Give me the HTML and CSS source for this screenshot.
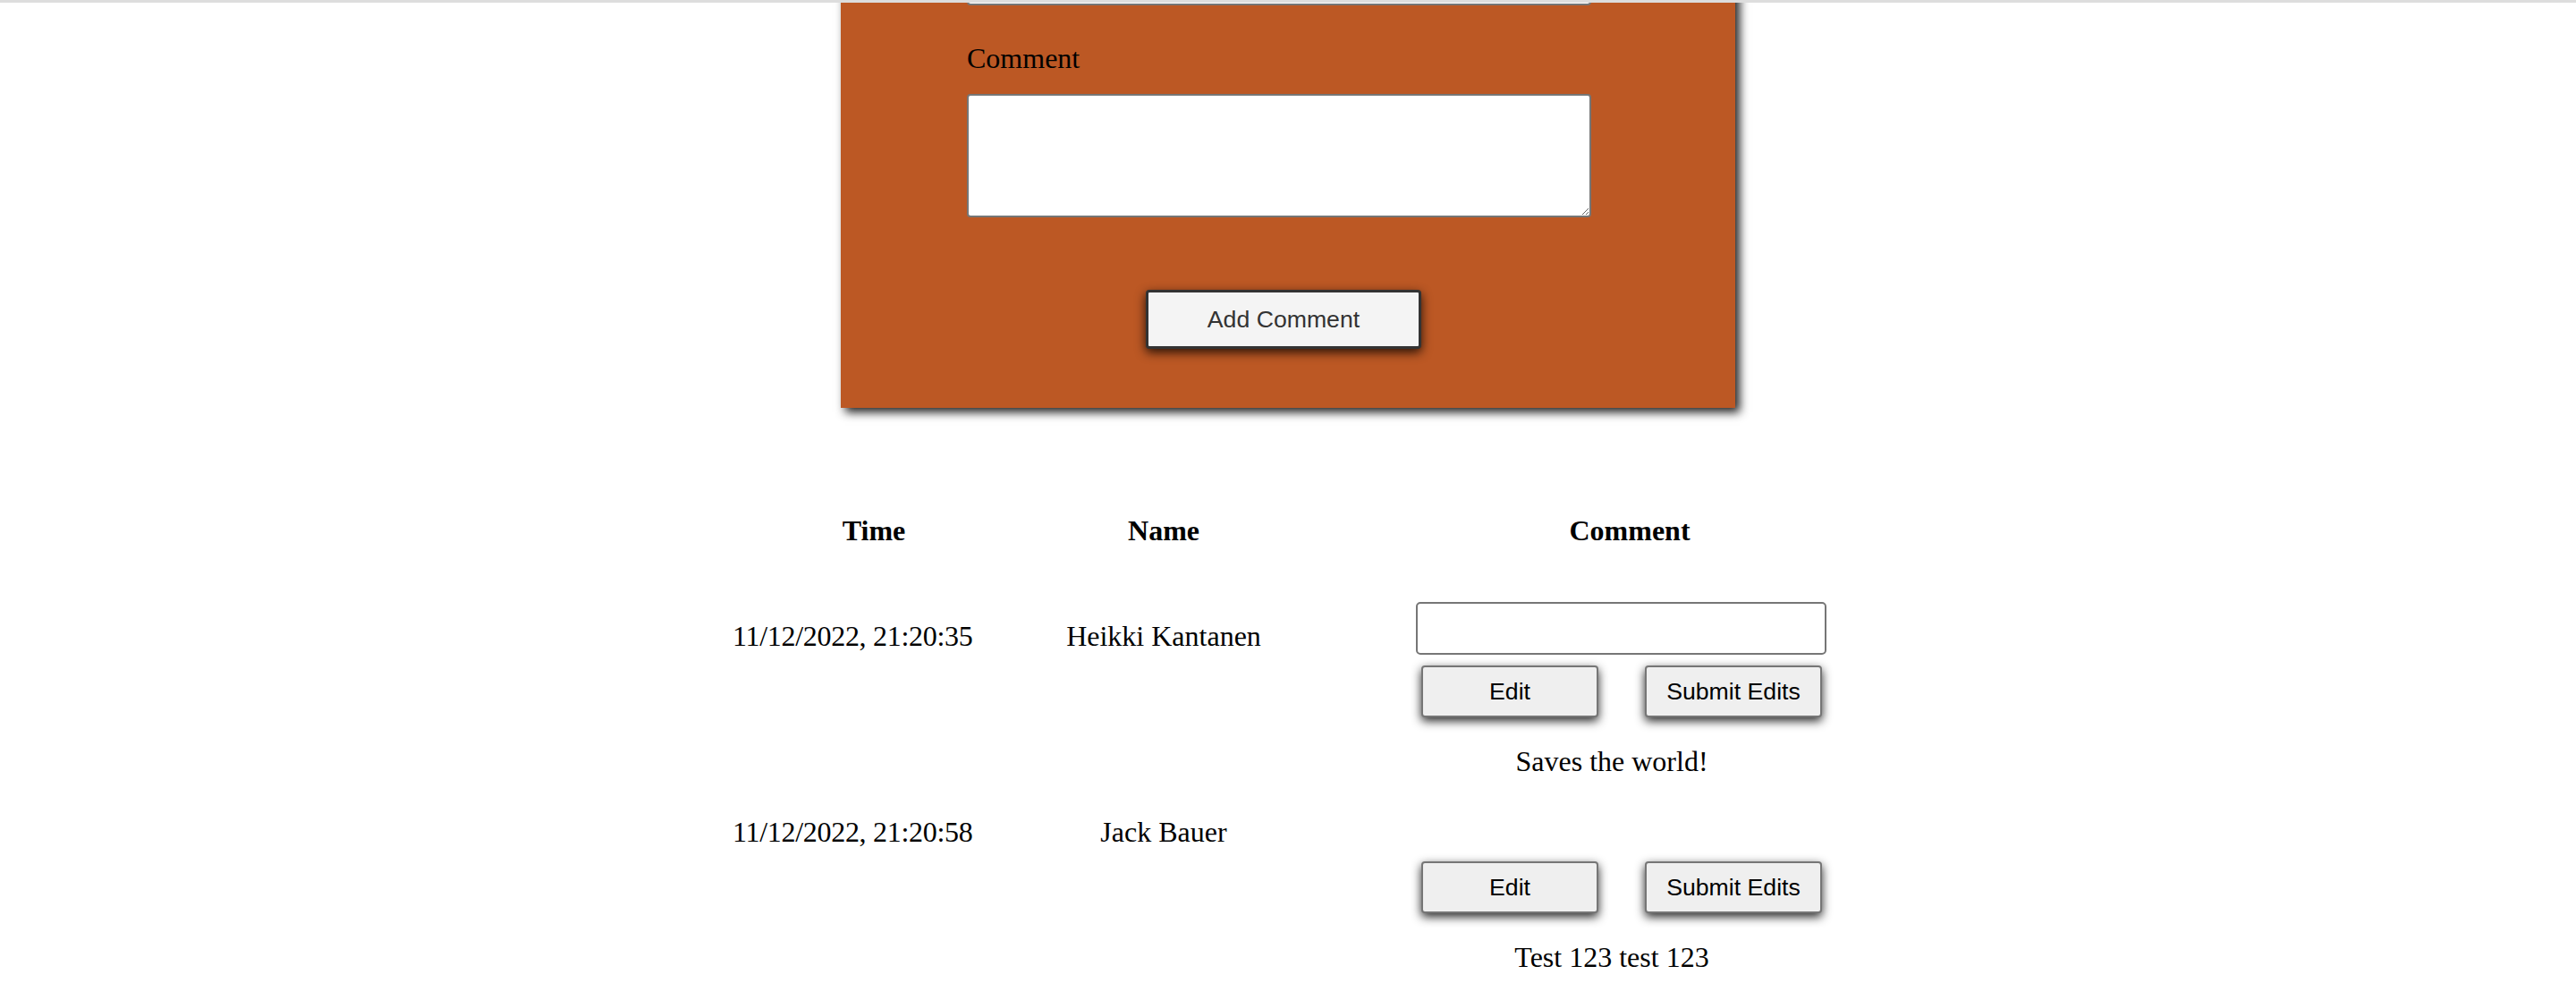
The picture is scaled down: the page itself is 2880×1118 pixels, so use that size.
FILE: index.html
```html
<!DOCTYPE html>
<html lang="en">
<head>
<meta charset="utf-8">
<title>Guestbook</title>
<link rel="stylesheet" href="styles.css">
</head>
<body>
<div class="top-rule"></div>
<main class="page">
  <form class="card">
    <input class="field-input" id="name" type="text" aria-label="Name">
    <label class="field-label" for="comment">Comment</label>
    <textarea class="field-textarea" id="comment"></textarea>
    <button class="add-btn" type="button">Add Comment</button>
  </form>

  <section class="comments">
    <div class="row row-head">
      <div class="cell cell-time">Time</div>
      <div class="cell cell-name">Name</div>
      <div class="cell cell-comment">Comment</div>
    </div>

    <div class="row">
      <div class="cell cell-time">11/12/2022, 21:20:35</div>
      <div class="cell cell-name">Heikki Kantanen</div>
      <div class="cell cell-comment">
        <div class="comment-box">
          <input class="edit-input" type="text" aria-label="Edit comment">
          <div class="edit-actions">
            <button class="edit-btn" type="button">Edit</button>
            <button class="edit-btn" type="button">Submit Edits</button>
          </div>
          <div class="comment-text">Saves the world!</div>
        </div>
      </div>
    </div>

    <div class="row">
      <div class="cell cell-time">11/12/2022, 21:20:58</div>
      <div class="cell cell-name">Jack Bauer</div>
      <div class="cell cell-comment">
        <div class="comment-box">
          <input class="edit-input edit-input-hidden" type="text" aria-label="Edit comment">
          <div class="edit-actions">
            <button class="edit-btn" type="button">Edit</button>
            <button class="edit-btn" type="button">Submit Edits</button>
          </div>
          <div class="comment-text">Test 123 test 123</div>
        </div>
      </div>
    </div>
  </section>
</main>
</body>
</html>
```

FILE: styles.css
```css
html, body {
  margin: 0;
  padding: 0;
  background: #ffffff;
}

body {
  font-family: "Liberation Serif", "Times New Roman", serif;
  font-size: 32px;
  color: #000000;
}

.top-rule {
  position: fixed;
  top: 0;
  left: 0;
  right: 0;
  height: 3px;
  background: #dddddd;
  z-index: 5;
}

/* ---------- form card (page is scrolled: its top is above the viewport) ---------- */
.card {
  width: 1000px;
  box-sizing: border-box;
  margin: -93px auto 0;
  padding: 40px 0 66px 141px;
  background: #bc5824;
  box-shadow: 5px 5px 10px #222222;
}

.field-label {
  display: block;
  line-height: 37px;
  margin: 41px 0 21px;
}

.field-input,
.field-textarea {
  display: block;
  box-sizing: border-box;
  width: 698px;
  margin: 0;
  padding: 0;
  border: 2px solid #767676;
  border-radius: 4px;
  background: #ffffff;
}

.field-input {
  height: 59px;
}

.field-textarea {
  height: 138px;
  resize: both;
}

.add-btn {
  display: block;
  box-sizing: border-box;
  width: 308px;
  height: 66px;
  margin: 81px 0 0 200px;
  padding: 0;
  background: #f4f4f4;
  border: 3px solid #333333;
  border-radius: 4px;
  box-shadow: 0 4px 12px rgba(0, 0, 0, 0.8);
  font-family: "Liberation Sans", Arial, sans-serif;
  font-size: 26.67px;
  color: #333333;
}

/* ---------- comments table ---------- */
.comments {
  width: 1242px;
  margin: 119px auto 0;
  display: flex;
  flex-direction: column;
  gap: 22px;
}

.row {
  display: grid;
  grid-template-columns: 316px 332px 594px;
  align-items: start;
  line-height: 37px;
}

.row-head {
  font-weight: bold;
  text-align: center;
  margin-bottom: 39px;
}

.cell-time {
  text-align: left;
  padding-top: 20px;
  letter-spacing: -0.3px;
}

.cell-name {
  text-align: center;
  padding-top: 20px;
}

.cell-comment {
  padding-left: 116px;
}

.row-head .cell {
  padding-top: 0;
  text-align: center;
  letter-spacing: 0;
}

.comment-box {
  width: 459px;
}

.edit-input {
  display: block;
  box-sizing: border-box;
  width: 459px;
  height: 59px;
  margin: 0;
  padding: 0;
  border: 2px solid #767676;
  border-radius: 5px;
  background: #ffffff;
}

.edit-input-hidden {
  visibility: hidden;
}

.edit-actions {
  display: flex;
  justify-content: space-between;
  padding: 0 5px 0 6px;
  margin-top: 12px;
}

.edit-btn {
  box-sizing: border-box;
  width: 198px;
  height: 58px;
  margin: 0;
  padding: 0;
  background: #efefef;
  border: 2px solid #767676;
  border-radius: 4px;
  box-shadow: 0 4px 11px rgba(0, 0, 0, 0.85);
  font-family: "Liberation Sans", Arial, sans-serif;
  font-size: 26.67px;
  color: #000000;
}

.comment-text {
  margin-top: 31px;
  padding-right: 21px;
  text-align: center;
}
```
